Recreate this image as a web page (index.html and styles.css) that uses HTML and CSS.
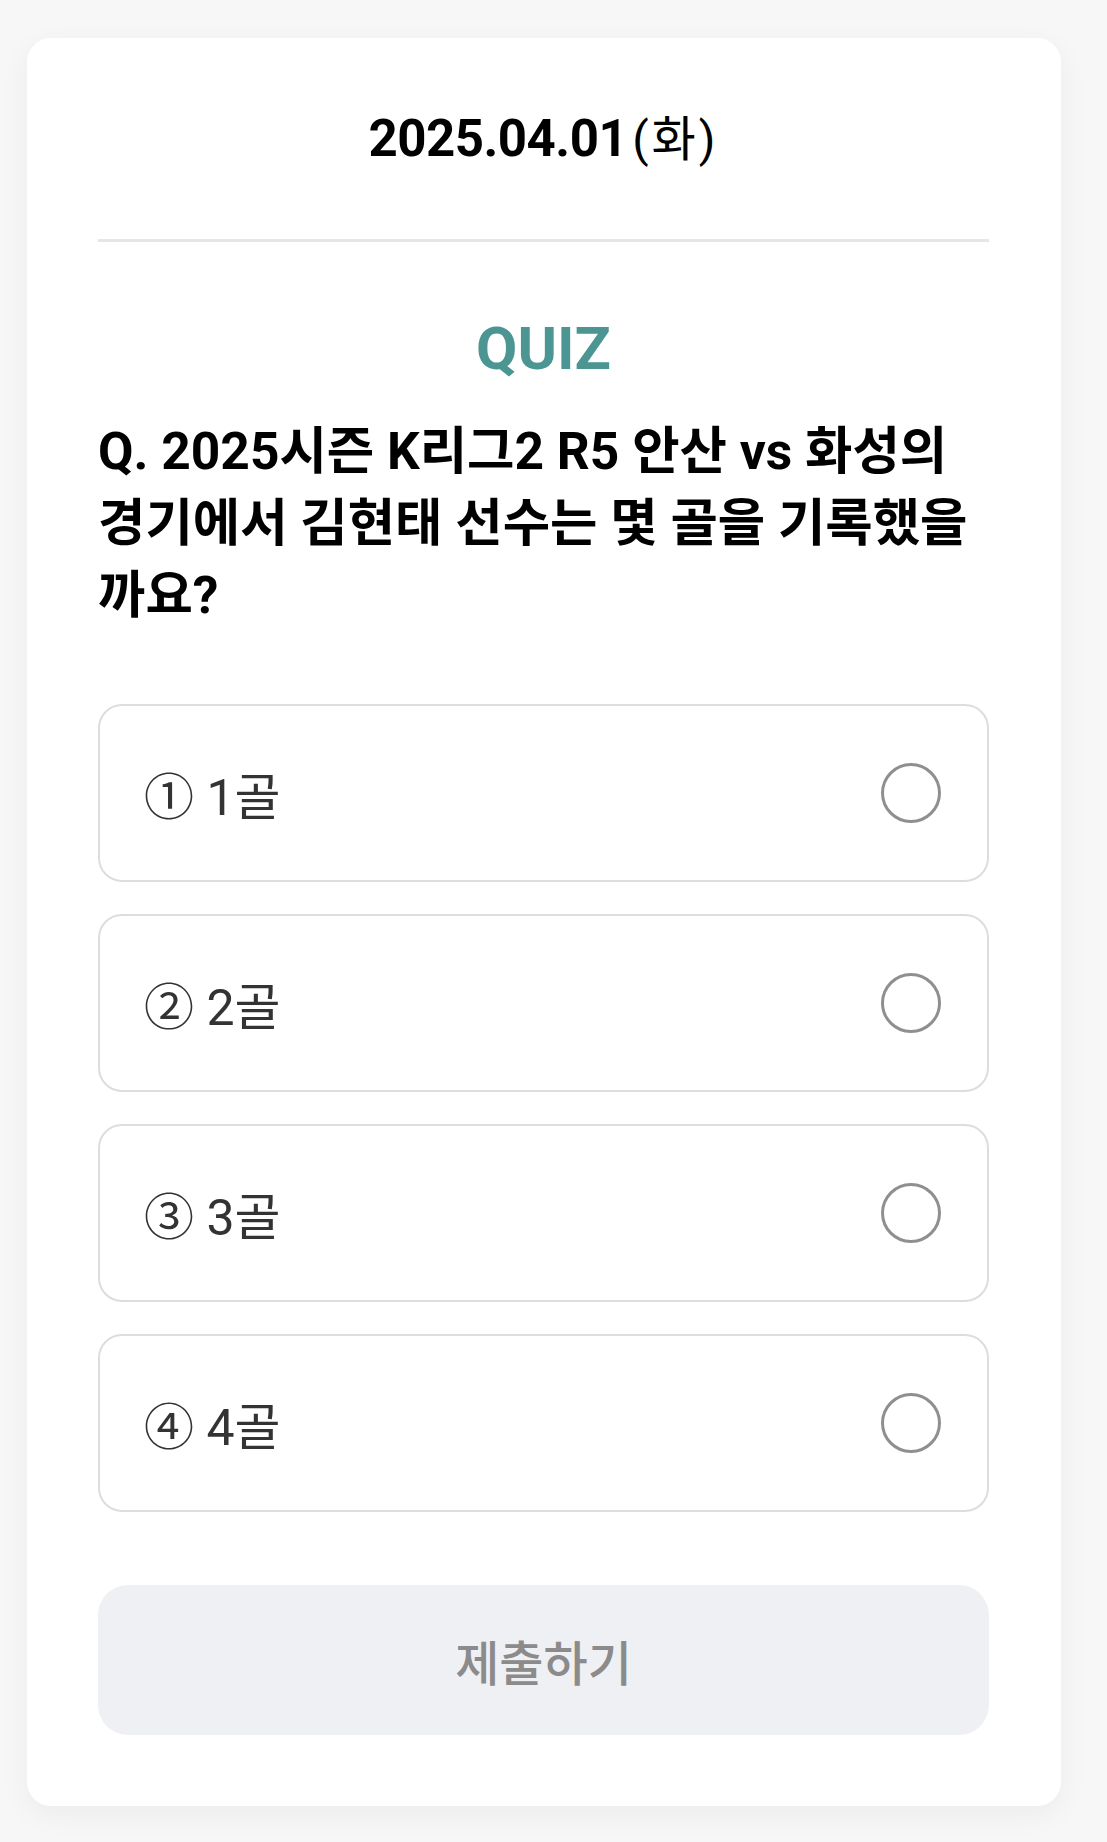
FILE: index.html
```html
<!DOCTYPE html>
<html lang="ko">
<head>
<meta charset="utf-8">
<title>QUIZ</title>
<link rel="stylesheet" href="styles.css">
</head>
<body>
<main class="page">
  <section class="card">
    <div class="date"><span class="date-num">2025.04.01</span><span class="date-day">(화)</span></div>
    <div class="divider"></div>
    <h2 class="quiz-label">QUIZ</h2>
    <p class="question">Q. 2025시즌 K리그2 R5 안산 vs 화성의 경기에서 김현태 선수는 몇 골을 기록했을까요?</p>
    <ul class="options">
      <li class="option"><span class="option-text">① 1골</span><span class="radio"></span></li>
      <li class="option"><span class="option-text">② 2골</span><span class="radio"></span></li>
      <li class="option"><span class="option-text">③ 3골</span><span class="radio"></span></li>
      <li class="option"><span class="option-text">④ 4골</span><span class="radio"></span></li>
    </ul>
    <button class="submit" type="button">제출하기</button>
  </section>
</main>
</body>
</html>
```

FILE: styles.css
```css
* {
  box-sizing: border-box;
}

html, body {
  margin: 0;
  padding: 0;
}

body {
  background: #f7f7f7;
  font-family: Roboto, "Noto Sans CJK KR", sans-serif;
  color: #111;
}

.page {
  padding: 38px 46px 35px 27px;
}

.card {
  background: #ffffff;
  border-radius: 24px;
  padding: 60px 72px 71px 71px;
  box-shadow: 0 8px 30px rgba(0, 0, 0, 0.05);
}

.date {
  text-align: center;
  font-size: 51px;
  line-height: 81px;
  height: 81px;
  color: #000;
}

.date-num {
  font-weight: 700;
  letter-spacing: -0.5px;
}

.date-day {
  font-weight: 400;
  font-size: 48px;
  letter-spacing: 3px;
  margin-left: 5px;
}

.divider {
  margin-top: 60px;
  height: 3px;
  background: #e6e6e6;
}

.quiz-label {
  margin: 71px 0 0;
  text-align: center;
  font-size: 60px;
  line-height: 72px;
  font-weight: 700;
  color: #4b9692;
}

.question {
  margin: 31px 0 0;
  font-size: 51.5px;
  line-height: 72px;
  font-weight: 700;
  color: #000;
}

.options {
  list-style: none;
  margin: 72px 0 0;
  padding: 0;
  display: flex;
  flex-direction: column;
  gap: 32px;
}

.option {
  height: 178px;
  border: 2px solid #dddddd;
  border-radius: 24px;
  display: flex;
  align-items: center;
  justify-content: space-between;
  padding: 0 46px 0 44px;
  background: #fff;
}

.option-text {
  font-size: 50px;
  font-weight: 400;
  color: #333333;
}

.radio {
  width: 60px;
  height: 60px;
  border: 3px solid #8f8f8f;
  border-radius: 50%;
  flex: none;
}

.submit {
  display: block;
  width: 100%;
  height: 150px;
  margin-top: 73px;
  border: none;
  border-radius: 30px;
  background: #eff0f3;
  color: #8b8b8b;
  font-family: Roboto, "Noto Sans CJK KR", sans-serif;
  font-size: 48px;
  font-weight: 500;
  padding: 0;
}
```
